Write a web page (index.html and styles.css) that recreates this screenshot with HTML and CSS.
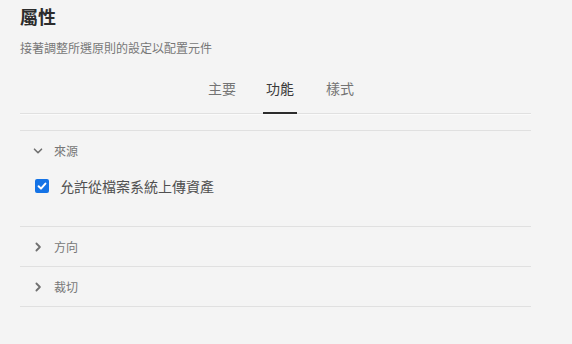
FILE: index.html
```html
<!DOCTYPE html>
<html lang="zh-Hant">
<head>
<meta charset="utf-8">
<link rel="stylesheet" href="styles.css">
</head>
<body>
<div class="panel">
  <h1 class="title">屬性</h1>
  <p class="subtitle">接著調整所選原則的設定以配置元件</p>
  <div class="tabs">
    <div class="tab">主要</div>
    <div class="tab active">功能</div>
    <div class="tab last">樣式</div>
  </div>
  <div class="spacer"></div>
  <section class="acc open">
    <div class="acc-head">
      <svg class="chev" width="10" height="10" viewBox="0 0 10 10"><path d="M1.5 3.2 L5 6.7 L8.5 3.2" fill="none" stroke="#707070" stroke-width="1.6" stroke-linecap="round" stroke-linejoin="round"/></svg>
      <span>來源</span>
    </div>
    <div class="acc-body">
      <label class="check">
        <span class="box"><svg width="14" height="14" viewBox="0 0 14 14"><path d="M3.6 7.2 L6 9.6 L10.4 4.6" fill="none" stroke="#fff" stroke-width="2" stroke-linecap="round" stroke-linejoin="round"/></svg></span>
        <span class="check-label">允許從檔案系統上傳資產</span>
      </label>
    </div>
  </section>
  <section class="acc">
    <div class="acc-head">
      <svg class="chev" width="10" height="10" viewBox="0 0 10 10"><path d="M3.4 1.5 L6.9 5 L3.4 8.5" fill="none" stroke="#707070" stroke-width="1.8" stroke-linecap="round" stroke-linejoin="round"/></svg>
      <span>方向</span>
    </div>
  </section>
  <section class="acc">
    <div class="acc-head">
      <svg class="chev" width="10" height="10" viewBox="0 0 10 10"><path d="M3.4 1.5 L6.9 5 L3.4 8.5" fill="none" stroke="#707070" stroke-width="1.8" stroke-linecap="round" stroke-linejoin="round"/></svg>
      <span>裁切</span>
    </div>
  </section>
</div>
</body>
</html>
```

FILE: styles.css
```css
html, body {
  margin: 0;
  padding: 0;
  background: #f4f4f4;
}
body {
  font-family: "Noto Sans CJK TC", "Noto Sans", sans-serif;
  color: #4b4b4b;
}
.panel {
  width: 511px;
  margin-left: 20px;
}
.title {
  margin: 0;
  padding-top: 3px;
  font-size: 18px;
  line-height: 26px;
  font-weight: 700;
  color: #2c2c2c;
}
.subtitle {
  margin: 10px 0 0;
  font-size: 12px;
  line-height: 18px;
  color: #777777;
}
.tabs {
  display: flex;
  justify-content: center;
  gap: 24px;
  margin-top: 17px;
  padding-left: 11px;
  border-bottom: 1px solid #e0e0e0;
  box-shadow: 0 1px 0 #fafafa;
}
.tab {
  position: relative;
  padding: 0 3px;
  font-size: 14px;
  line-height: 20px;
  height: 39px;
  padding-top: 4px;
  box-sizing: border-box;
  color: #747474;
}
.tab.last {
  margin-left: 2px;
}
.tab.active {
  color: #3a3a3a;
}
.tab.active::after {
  content: "";
  position: absolute;
  left: 0;
  right: 0;
  bottom: -1px;
  height: 2px;
  background: #2c2c2c;
}
.spacer {
  height: 16px;
  border-bottom: 1px solid #e0e0e0;
}
.acc {
  border-bottom: 1px solid #e0e0e0;
}
.acc-head {
  display: flex;
  align-items: center;
  height: 39px;
  padding-left: 13px;
  font-size: 12px;
  color: #777777;
}
.chev {
  margin-right: 11px;
}
.acc-body {
  height: 56px;
}
.check {
  display: flex;
  align-items: center;
  padding-left: 15px;
  padding-top: 6px;
}
.box {
  width: 14px;
  height: 14px;
  border-radius: 2px;
  background: #1473e6;
  display: flex;
}
.check-label {
  margin-left: 11px;
  font-size: 14px;
  line-height: 20px;
  color: #505050;
}
```
